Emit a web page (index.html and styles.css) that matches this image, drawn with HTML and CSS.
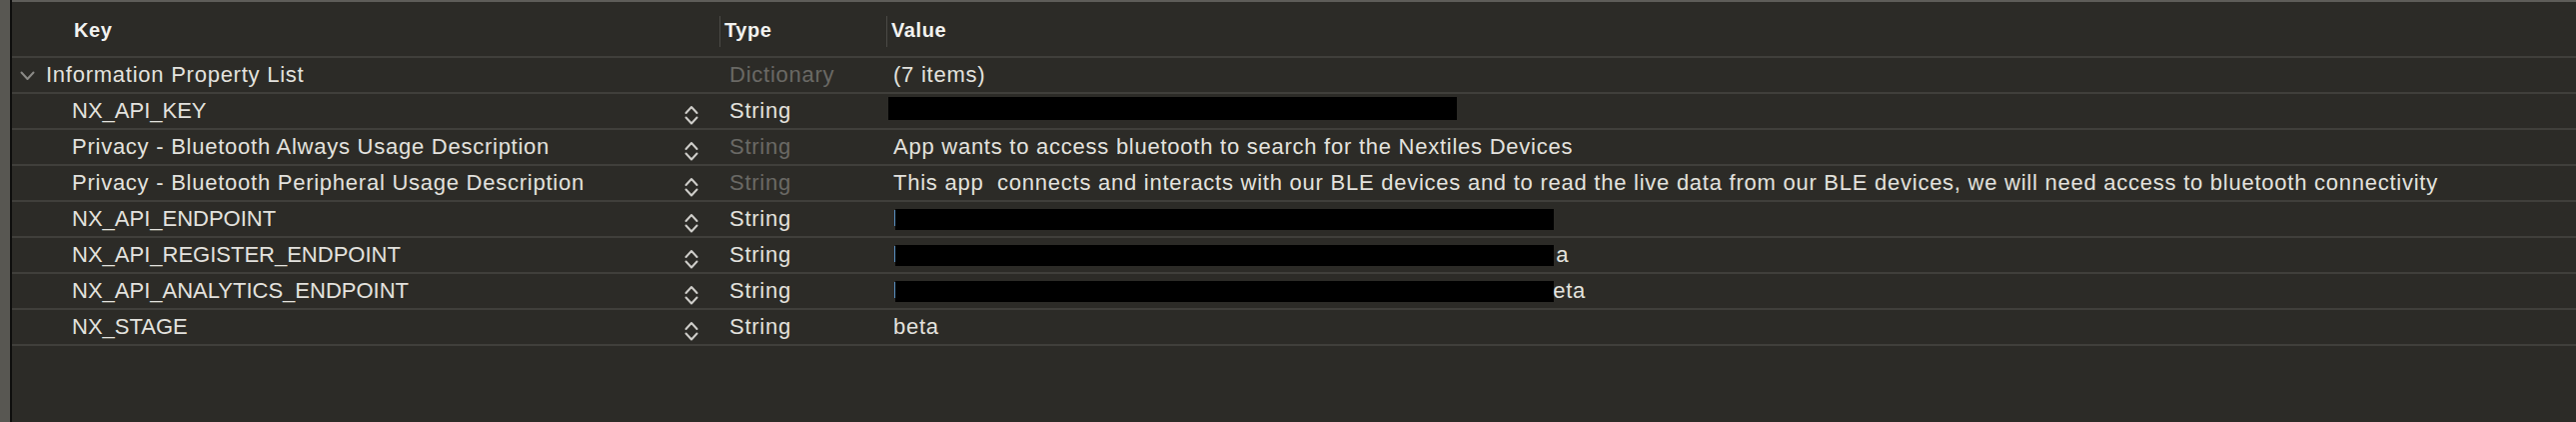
FILE: index.html
```html
<!DOCTYPE html>
<html>
<head>
<meta charset="utf-8">
<link rel="stylesheet" href="styles.css">
</head>
<body>
<div class="frame">
  <div class="edge"></div>
  <div class="edge-line"></div>
  <div class="table">
    <div class="row header">
      <div class="cell key"><span class="head-text">Key</span></div>
      <div class="cell type"><div class="col-divider"></div><span class="head-text">Type</span></div>
      <div class="cell value"><div class="col-divider"></div><span class="head-text">Value</span></div>
    </div>
    <div class="row">
      <div class="cell key root">
        <svg class="disclosure" width="15" height="10" viewBox="0 0 15 10"><polyline points="1.5,1.5 7.5,8 13.5,1.5" fill="none" stroke="#8b8a86" stroke-width="2" stroke-linecap="round" stroke-linejoin="round"/></svg>
        <span class="label">Information Property List</span>
      </div>
      <div class="cell type dim">Dictionary</div>
      <div class="cell value">(7 items)</div>
    </div>
    <div class="row">
      <div class="cell key"><span class="label caps">NX_API_KEY</span><svg class="stepper" width="14" height="20" viewBox="0 0 14 20"><polyline points="1.5,8 7,2 12.5,8" fill="none" stroke="#cfceca" stroke-width="2" stroke-linecap="round" stroke-linejoin="round"/><polyline points="1.5,12.5 7,18.5 12.5,12.5" fill="none" stroke="#cfceca" stroke-width="2" stroke-linecap="round" stroke-linejoin="round"/></svg></div>
      <div class="cell type">String</div>
      <div class="cell value"><span class="redact redact-key"></span></div>
    </div>
    <div class="row">
      <div class="cell key"><span class="label">Privacy - Bluetooth Always Usage Description</span><svg class="stepper" width="14" height="20" viewBox="0 0 14 20"><polyline points="1.5,8 7,2 12.5,8" fill="none" stroke="#cfceca" stroke-width="2" stroke-linecap="round" stroke-linejoin="round"/><polyline points="1.5,12.5 7,18.5 12.5,12.5" fill="none" stroke="#cfceca" stroke-width="2" stroke-linecap="round" stroke-linejoin="round"/></svg></div>
      <div class="cell type dim">String</div>
      <div class="cell value">App wants to access bluetooth to search for the Nextiles Devices</div>
    </div>
    <div class="row">
      <div class="cell key"><span class="label">Privacy - Bluetooth Peripheral Usage Description</span><svg class="stepper" width="14" height="20" viewBox="0 0 14 20"><polyline points="1.5,8 7,2 12.5,8" fill="none" stroke="#cfceca" stroke-width="2" stroke-linecap="round" stroke-linejoin="round"/><polyline points="1.5,12.5 7,18.5 12.5,12.5" fill="none" stroke="#cfceca" stroke-width="2" stroke-linecap="round" stroke-linejoin="round"/></svg></div>
      <div class="cell type dim">String</div>
      <div class="cell value pre">This app  connects and interacts with our BLE devices and to read the live data from our BLE devices, we will need access to bluetooth connectivity</div>
    </div>
    <div class="row">
      <div class="cell key"><span class="label caps">NX_API_ENDPOINT</span><svg class="stepper" width="14" height="20" viewBox="0 0 14 20"><polyline points="1.5,8 7,2 12.5,8" fill="none" stroke="#cfceca" stroke-width="2" stroke-linecap="round" stroke-linejoin="round"/><polyline points="1.5,12.5 7,18.5 12.5,12.5" fill="none" stroke="#cfceca" stroke-width="2" stroke-linecap="round" stroke-linejoin="round"/></svg></div>
      <div class="cell type">String</div>
      <div class="cell value"><span class="url-start">h</span><span class="redact redact-url"></span></div>
    </div>
    <div class="row">
      <div class="cell key"><span class="label caps">NX_API_REGISTER_ENDPOINT</span><svg class="stepper" width="14" height="20" viewBox="0 0 14 20"><polyline points="1.5,8 7,2 12.5,8" fill="none" stroke="#cfceca" stroke-width="2" stroke-linecap="round" stroke-linejoin="round"/><polyline points="1.5,12.5 7,18.5 12.5,12.5" fill="none" stroke="#cfceca" stroke-width="2" stroke-linecap="round" stroke-linejoin="round"/></svg></div>
      <div class="cell type">String</div>
      <div class="cell value"><span class="url-start">h</span><span class="redact redact-url"></span><span class="tail">a</span></div>
    </div>
    <div class="row">
      <div class="cell key"><span class="label caps">NX_API_ANALYTICS_ENDPOINT</span><svg class="stepper" width="14" height="20" viewBox="0 0 14 20"><polyline points="1.5,8 7,2 12.5,8" fill="none" stroke="#cfceca" stroke-width="2" stroke-linecap="round" stroke-linejoin="round"/><polyline points="1.5,12.5 7,18.5 12.5,12.5" fill="none" stroke="#cfceca" stroke-width="2" stroke-linecap="round" stroke-linejoin="round"/></svg></div>
      <div class="cell type">String</div>
      <div class="cell value"><span class="url-start">h</span><span class="redact redact-url"></span><span class="tail tight">eta</span></div>
    </div>
    <div class="row">
      <div class="cell key"><span class="label caps">NX_STAGE</span><svg class="stepper" width="14" height="20" viewBox="0 0 14 20"><polyline points="1.5,8 7,2 12.5,8" fill="none" stroke="#cfceca" stroke-width="2" stroke-linecap="round" stroke-linejoin="round"/><polyline points="1.5,12.5 7,18.5 12.5,12.5" fill="none" stroke="#cfceca" stroke-width="2" stroke-linecap="round" stroke-linejoin="round"/></svg></div>
      <div class="cell type">String</div>
      <div class="cell value">beta</div>
    </div>
  </div>
</div>
</body>
</html>
```
FILE: styles.css
```css
html, body {
  margin: 0;
  padding: 0;
  background: #2c2b27;
}
body {
  font-family: "Liberation Sans", Arial, sans-serif;
  color: #e3e2de;
  font-size: 22px;
  letter-spacing: 0.75px;
}
.frame {
  display: flex;
  height: 422px;
  width: 2578px;
  overflow: hidden;
}
.edge {
  width: 10px;
  background: #585752;
  flex: none;
}
.edge-line {
  width: 2px;
  background: #0e0e0d;
  flex: none;
}
.table {
  flex: 1;
  border-top: 2px solid #5e5d59;
  background: #2c2b27;
}
.row {
  display: grid;
  grid-template-columns: 708px 166px 1fr;
  height: 34px;
  border-bottom: 2px solid #403f3b;
}
.row.header {
  height: 54px;
}
.cell {
  display: flex;
  align-items: center;
  white-space: nowrap;
  min-width: 0;
}
.cell.key {
  padding-left: 60px;
  padding-right: 21px;
  justify-content: space-between;
}
.header .cell.key {
  padding-left: 62px;
}
.cell.key.root {
  padding-left: 8px;
  justify-content: flex-start;
}
.label.caps {
  letter-spacing: 0;
}
.disclosure {
  margin-right: 11px;
  margin-top: 2px;
}
.cell.type {
  padding-left: 10px;
}
.cell.value {
  padding-left: 8px;
}
.header .cell.type,
.header .cell.value {
  padding-left: 0;
}
.header .cell.value {
  padding-left: 1px;
}
.col-divider {
  width: 1px;
  height: 31px;
  background: #4b4a46;
  margin-right: 4px;
  margin-top: 4px;
}
.head-text {
  font-size: 20px;
  font-weight: 700;
  letter-spacing: 0.6px;
  color: #f2f2f0;
  margin-top: 3px;
}
.dim {
  color: #6a6965;
}
.pre {
  white-space: pre;
}
.stepper {
  margin-top: 7px;
  flex: none;
}
.redact {
  display: inline-block;
  background: #000;
  flex: none;
}
.redact-key {
  width: 569px;
  height: 23px;
  margin-left: -5px;
  margin-top: -5px;
}
.url-start {
  letter-spacing: 0;
}
.redact-url {
  width: 659px;
  height: 21px;
  margin-top: 1px;
  margin-left: -10px;
}
.tail {
  margin-left: 2px;
}
.tail.tight {
  margin-left: -1px;
}
```
